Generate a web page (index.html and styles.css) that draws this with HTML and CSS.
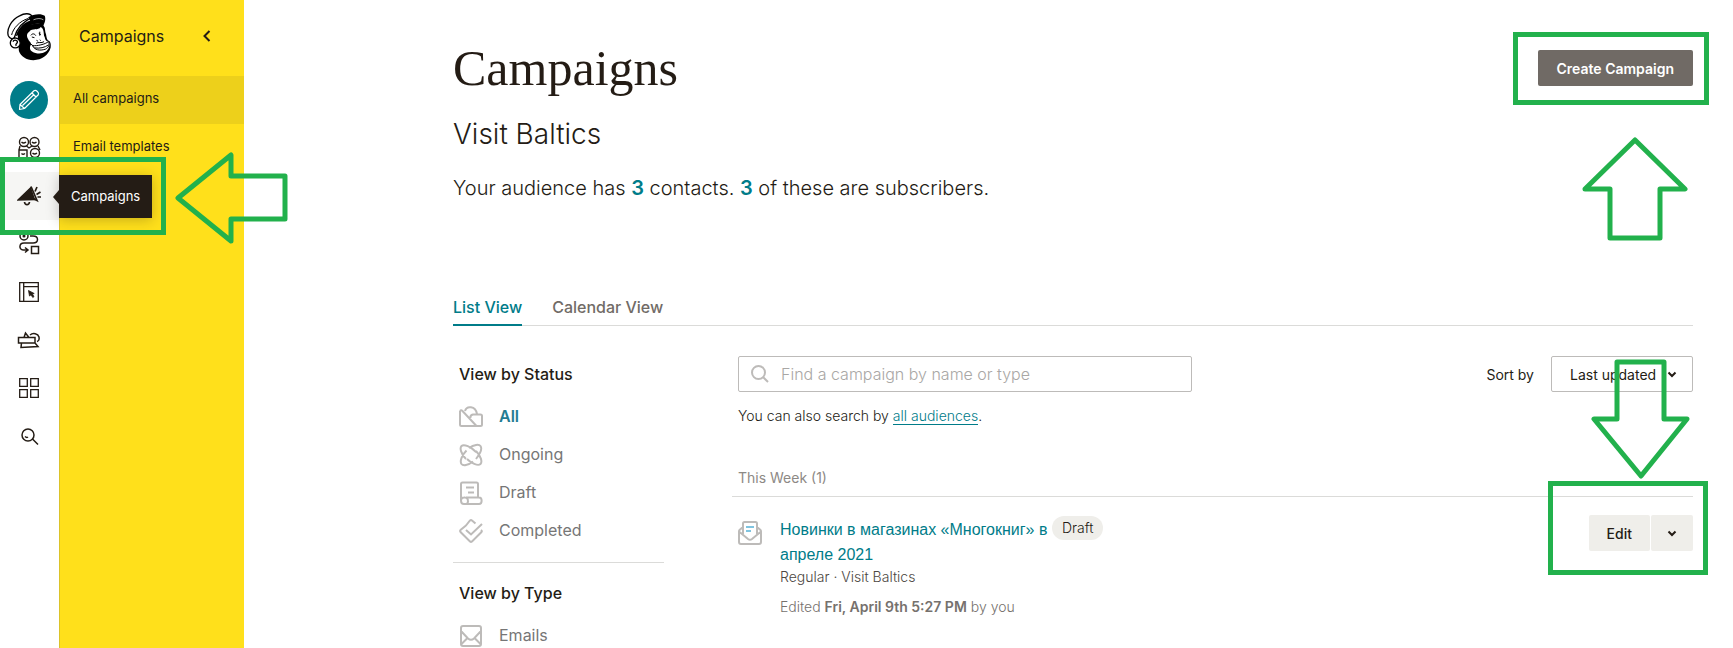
FILE: index.html
```
<!DOCTYPE html>
<html lang="en">
<head>
  <meta charset="UTF-8">
  <title>Campaigns</title>
  <link rel="stylesheet" href="styles.css">
</head>
<body>

<div class="app">
  <nav class="rail" aria-label="Main">
    <a href="#" class="logo" aria-label="Home">
      <svg width="45" height="48" viewBox="20 38 136 144">
        <path d="M52 100 L76 74 L126 68 L134 82 L136 96 C140 106 138 112 143 120 C153 122 153 134 152 142 C146 164 126 180 100 180 C78 180 62 168 56 152 Z" fill="#000"/>
        <path d="M88 93 C96 82 114 92 122 80 C131 84 131 98 132 106 C136 112 134 118 140 122 C148 124 151 130 147 140 C142 156 124 163 106 158 C92 156 86 146 91 136 C97 128 86 124 84 116 C78 106 80 98 88 93 Z" fill="#fff"/>
        <path d="M24 106 C18 88 32 58 58 46 C72 38 90 36 98 50 C84 56 52 74 42 112 C36 118 28 114 24 106 Z" fill="#fff" stroke="#000" stroke-width="4"/>
        <path d="M84 50 C100 40 124 38 134 46 C138 56 134 68 130 75 C118 66 96 70 78 80 C66 86 58 94 54 104 L47 108 C50 90 66 68 90 60 Z" fill="#000"/>
        <path d="M34 104 C38 84 58 62 84 54" fill="none" stroke="#000" stroke-width="3"/>
        <path d="M100 58 C112 53 122 53 130 58" fill="none" stroke="#fff" stroke-width="2"/>
        <circle cx="45" cy="128" r="15" fill="#fff" stroke="#000" stroke-width="4"/>
        <path d="M38 124 C42 116 54 120 51 127 C48 131 44 132 48 137" fill="none" stroke="#000" stroke-width="4"/>
        <path d="M92 105 C97 98 104 100 107 106 M95 110 l8 2 M119 94 v12 M116 99 l6 4 M109 120 l5 3 M119 118 l3 3" fill="none" stroke="#000" stroke-width="3"/>
        <path d="M97 136 C110 138 136 132 145 124 C150 132 146 142 136 147 C118 152 104 150 97 136 Z" fill="#fff" stroke="#000" stroke-width="3" stroke-linejoin="round"/>
        <path d="M102 143 C120 145 134 142 145 134 M92 131 l8 7 M108 129 C114 124 124 130 132 124" fill="none" stroke="#000" stroke-width="3"/>
      </svg>
    </a>
    <a href="#" class="rail-item" aria-label="Create">
      <span class="create">
        <svg width="22" height="22" viewBox="0 0 22 22" fill="none" stroke="#fff" stroke-width="1.2" stroke-linejoin="round">
          <path d="M1.500 20.500 L2 15.500 L16 1.800 C18 .5 21.500 3.800 20.300 5.800 L6.500 19.500 Z M14 4 L18 8 M2 15.500 L6.500 19.500 M4.500 16.500 L16 5.500"/>
        </svg>
      </span>
    </a>
    <a href="#" class="rail-item" aria-label="Audience">
      <svg width="24" height="24" viewBox="0 0 24 24" fill="none" stroke="#241c15" stroke-width="1.4">
        <circle cx="7" cy="6" r="4.500"/><circle cx="17.500" cy="6" r="4.500"/><circle cx="18" cy="17" r="4.500"/>
        <path d="M2 22 V14 H10 V22 M4.500 17.500 q1.500 1.500 3.500 0 M4.500 6 q2 2 4.500 0 M15 6 q2 2 4.500 0 M15.500 17 q2 2 4.500 0 M3 10 L2 14 M21 10 L23 14 M9.500 10 L12 12 L15 10"/>
      </svg>
    </a>
    <a href="#" class="rail-item active" aria-label="Campaigns">
      <svg width="24" height="24" viewBox="0 0 24 24" fill="none" stroke="#241c15" stroke-width="1.4">
        <path d="M1 16 L13.500 4 L17.500 15.500 Z" fill="#241c15"/>
        <path d="M14 2.500 L20 16.500 L15 14 M7.500 18 C8 21.500 12 21.500 12.500 18 M18 7.500 L20 3 M19.500 10.500 L23.500 8 M20.500 13 H24" stroke-width="1.700"/>
      </svg>
      <span class="tooltip">Campaigns</span>
    </a>
    <a href="#" class="rail-item" aria-label="Journeys">
      <svg width="24" height="24" viewBox="0 0 24 24" fill="none" stroke="#241c15" stroke-width="1.5">
        <circle cx="7" cy="4" r="4"/><circle cx="7" cy="4" r=".8"/>
        <path d="M13 4 H16 C22 4 22 11 16 11 H7 C1.500 11 2 18 6 18 H11 M8 15.500 L11 18 L8 20.500"/>
        <rect x="14.500" y="14.500" width="7" height="7"/>
      </svg>
    </a>
    <a href="#" class="rail-item" aria-label="Website">
      <svg width="20" height="20" viewBox="0 0 20 20" fill="none" stroke="#241c15" stroke-width="1.300">
        <path d="M.7 .7 H19.300 V19.300 H.7 Z M4.700 .7 V19.300 M4.700 4.700 H19.300"/>
        <path d="M9.500 8.500 L10.500 14 L12 12.800 L13.800 15.500 L15 14.500 L13.300 12 L15.200 11.500 Z" fill="#241c15" stroke-width=".8"/>
      </svg>
    </a>
    <a href="#" class="rail-item" aria-label="Content Studio">
      <svg width="24" height="24" viewBox="0 0 24 24" fill="none" stroke="#241c15" stroke-width="1.5">
        <path d="M1.500 9.500 H18 V15 H1.500 Z M7 9.500 L8.500 5 L12 9.500 M13 7 C16 4.500 21 5.500 22 9 C22.500 11.500 21.500 13 20 13.500 M4.500 15 L4 19.500 L21 18.500 L18 15"/>
      </svg>
    </a>
    <a href="#" class="rail-item" aria-label="Integrations">
      <svg width="20" height="20" viewBox="0 0 20 20" fill="none" stroke="#241c15" stroke-width="1.300">
        <path d="M.7 .7 H8.300 V8.300 H.7 Z M11.700 .7 H19.300 V8.300 H11.700 Z M.7 11.700 H8.300 V19.300 H.7 Z M11.700 11.700 H19.300 V19.300 H11.700 Z"/>
      </svg>
    </a>
    <a href="#" class="rail-item" aria-label="Search">
      <svg width="20" height="20" viewBox="0 0 20 20" fill="none" stroke="#241c15" stroke-width="1.5">
        <circle cx="9" cy="9" r="6"/><path d="M13.500 13 L19 18.500 M6 10.500 q1.500 1.500 3 .500"/>
      </svg>
    </a>
  </nav>

  <aside class="panel">
    <div class="panel-head">
      <span>Campaigns</span>
      <button class="collapse" aria-label="Collapse menu">
        <svg width="8" height="12" viewBox="0 0 8 12" fill="none" stroke="#241c15" stroke-width="2"><path d="M6.500 1 L1.500 6 L6.500 11"/></svg>
      </button>
    </div>
    <a href="#" class="panel-link current">All campaigns</a>
    <a href="#" class="panel-link">Email templates</a>
  </aside>

  <main class="main">
    <header class="page-head">
      <div>
        <h1>Campaigns</h1>
        <h2>Visit Baltics</h2>
        <p class="summary">Your audience has <a href="#">3</a> contacts. <a href="#">3</a> of these are subscribers.</p>
      </div>
      <button class="btn-create">Create Campaign</button>
    </header>

    <nav class="tabs" aria-label="Views">
      <a href="#" class="tab selected">List View</a>
      <a href="#" class="tab">Calendar View</a>
    </nav>

    <div class="columns">
      <div class="filters">
        <section class="filter-group">
          <h3>View by Status</h3>
          <ul>
            <li><a href="#" class="selected">
              <svg class="ico" viewBox="0 0 24 24"><path d="M1 6 V19.500 Q1 21 2.500 21 H21.500 Q23 21 23 19.500 V11 Q23 9.500 21.500 9.500 H14 Q11 10 11.500 13 M1 6 Q2 4.500 3.500 6 L17.500 21 M6 6 C7.500 .500 16.500 .500 18 9"/></svg>
              All</a></li>
            <li><a href="#">
              <svg class="ico" viewBox="0 0 24 24"><path d="M7 16 C2 11 .500 5 2.500 3 C5 .500 12 4 17 9 M17 8 C22 13 23.500 19 21.500 21 C19 23.500 12 20 8 16 M14 18.500 C9 22.500 4 23 2.500 21 C.500 18 3 12 7.500 7.500 M10 5 C15 1.500 20 1 21.500 3 C23.500 6 21 11 17 16"/></svg>
              Ongoing</a></li>
            <li><a href="#">
              <svg class="ico" viewBox="0 0 24 24"><path d="M2 20 V3 Q2 1.500 3.500 1.500 H17.500 Q19 1.500 19 3 V16 M7 6.500 H15 M9 11.500 H15 M7 16.500 H20 C23.500 16.500 23.500 23 20 23 H5 C1 23 1 16.500 5 16.500 C9 16 10 20 8 23"/></svg>
              Draft</a></li>
            <li><a href="#">
              <svg class="ico" viewBox="0 0 24 24"><path d="M7 6.500 L1.500 11 Q.700 12 1.500 13 L11 22.500 Q12 23.300 13 22.500 L22.500 13 Q23.300 12 22 11 M7 6.500 L11 1.500 Q12 .700 13 1.500 L16.500 4.500 M7 11 L12 15.500 L23 5"/></svg>
              Completed</a></li>
          </ul>
        </section>
        <section class="filter-group">
          <h3>View by Type</h3>
          <ul>
            <li><a href="#">
              <svg class="ico" viewBox="0 0 24 24"><path d="M4 2 H20 Q22 2 22 4 V20 Q22 22 20 22 H4 Q2 22 2 20 V4 Q2 2 4 2 Z M2 7 L9 14.500 Q12 17 15 14.500 L22 7 M2.500 20 L9 13.500 M21.500 20 L15 13.500"/></svg>
              Emails</a></li>
          </ul>
        </section>
      </div>

      <div class="results">
        <div class="toolbar">
          <div class="search">
            <svg width="18" height="18" viewBox="0 0 18 18" fill="none" stroke="#bdbbb9" stroke-width="2"><circle cx="7.500" cy="7.500" r="6.500"/><path d="M12.200 12.200 L17 17"/></svg>
            <input type="text" placeholder="Find a campaign by name or type" aria-label="Find a campaign by name or type">
          </div>
          <div class="sort">
            <label for="sort">Sort by</label>
            <div class="select">
              <select id="sort">
                <option>Last updated</option>
                <option>Last created</option>
              </select>
              <svg width="10" height="7" viewBox="0 0 10 7" fill="none" stroke="#241c15" stroke-width="2"><path d="M1.500 1.500 L5 5 L8.500 1.500"/></svg>
            </div>
          </div>
        </div>
        <p class="hint">You can also search by <a href="#">all audiences</a>.</p>

        <h4>This Week (1)</h4>
        <article class="campaign">
          <svg class="ico mail" viewBox="0 0 24 24"><path d="M5 6 L1.500 9 Q1 9.500 1 10.500 V21 Q1 23 3 23 H21 Q23 23 23 21 V10.500 Q23 9.500 22.500 9 L19 6 M5 13 V2.500 Q5 1 6.500 1 H17.500 Q19 1 19 2.500 V13 M1 10.500 L10 18 Q12 19.500 14 18 L23 10.500"/><path class="lines" d="M8 6 H16 M8 10 H13"/></svg>
          <div class="info">
            <div class="name">
              <a href="#">Новинки в магазинах «Многокниг» в апреле 2021</a>
              <span class="badge">Draft</span>
            </div>
            <p class="kind">Regular · Visit Baltics</p>
            <p class="edited">Edited <b>Fri, April 9th 5:27 PM</b> by you</p>
          </div>
          <div class="actions">
            <button>Edit</button>
            <button class="more" aria-label="More actions"><svg width="10" height="7" viewBox="0 0 10 7" fill="none" stroke="#241c15" stroke-width="2"><path d="M1.500 1.500 L5 5 L8.500 1.500"/></svg></button>
          </div>
        </article>
      </div>
    </div>
  </main>
</div>

<!-- tutorial marks over the page -->
<div class="mark mark-menu"></div>
<div class="mark mark-create"></div>
<div class="mark mark-edit"></div>
<svg class="arrow arrow-left" width="114" height="94" viewBox="0 0 114 94"><path d="M3 46 L56 3 V24 H110 V67 H56 V89 Z"/></svg>
<svg class="arrow arrow-up" width="106" height="106" viewBox="0 0 106 106"><path d="M53 4 L103 53 H78 V102 H28 V53 H3 Z"/></svg>
<svg class="arrow arrow-down" width="100" height="120" viewBox="0 0 100 120"><path d="M27 3 H74 V60 H97 L51 117 L4 60 H27 Z"/></svg>

</body>
</html>
```

FILE: styles.css
```
* { box-sizing: border-box; }
body { margin: 0; background: #fff; color: #241c15; font-family: Inter, "Liberation Sans", sans-serif; font-size: 14px; position: relative; }
h1, h2, h3, h4, p, ul { margin: 0; padding: 0; font-weight: 400; }
ul { list-style: none; }
a { color: #007c89; text-decoration: none; }
svg { display: block; flex: none; }
button, input, select { font: inherit; color: inherit; }
button { cursor: pointer; border: 0; }

.app { display: flex; min-height: 100vh; }

/* icon rail */
.rail { flex: none; width: 60px; padding-top: 13px; border-right: 1px solid #dbc329; }
.logo { display: block; margin: 0 0 15px 7px; }
.rail-item { display: flex; align-items: center; justify-content: center; height: 48px; padding-right: 1px; position: relative; }
.rail-item.active { background: #f6f6f4; }
.create { display: grid; place-items: center; width: 38px; height: 38px; border-radius: 50%; background: #007c89; }
.tooltip {
  position: absolute; left: 100%; top: 3px; z-index: 2; padding: 0 12px;
  font-size: 13px; line-height: 43px; background: #241c15; color: #fff; box-shadow: 0 2px 12px rgba(36, 28, 21, .25);
}
.tooltip::before {
  content: ""; position: absolute; left: -6px; top: 15px;
  border: solid transparent; border-width: 7px 6px 7px 0; border-right-color: #241c15;
}

/* yellow side menu */
.panel { flex: none; width: 184px; background: #ffe01b; }
.panel-head { display: flex; align-items: center; justify-content: space-between; height: 76px; padding: 0 33px 4px 19px; font-size: 16px; }
.collapse { padding: 0; background: none; }
.panel-link { display: flex; align-items: center; height: 48px; padding: 0 13px 4px; color: #241c15; font-size: 13px; }
.panel-link.current { background: #edd01b; }

.main { flex: 1; min-width: 0; padding: 0 40px 0 209px; }
.page-head { display: flex; justify-content: space-between; align-items: flex-start; padding-top: 40px; }
h1 { font-family: "Liberation Serif", serif; font-size: 50px; line-height: 56px; }
h2 { margin-top: 20px; font-size: 28px; line-height: 36px; font-weight: 300; }
.summary { margin-top: 22px; font-size: 20px; line-height: 28px; font-weight: 300; }
.summary a { font-weight: 600; }
.btn-create { margin-top: 10px; height: 36px; padding: 0 19px; border-radius: 2px; background: #706a65; color: #fff; font-size: 14px; font-weight: 600; }

.tabs { display: flex; gap: 30px; margin-top: 93px; border-bottom: 1px solid #dbdbd9; }
.tab { padding-bottom: 5px; margin-bottom: -1px; border-bottom: 2px solid transparent; font-size: 16px; line-height: 24px; font-weight: 500; color: #716b66; }
.tab.selected { border-color: #007c89; color: #007c89; }

.columns { display: grid; grid-template-columns: 211px 1fr; gap: 68px; padding-top: 30px; }
.filter-group { padding: 8px 6px 0; }
.filter-group + .filter-group { margin-top: 19px; padding-top: 20px; border-top: 1px solid #dbdbd9; }
h3 { margin-bottom: 21px; font-size: 16px; line-height: 20px; font-weight: 500; }
.filters ul { display: grid; gap: 14px; }
.filters li a { display: flex; gap: 16px; height: 24px; font-size: 16px; line-height: 22px; color: #767676; }
.filters li a.selected { color: #237c92; font-weight: 600; }
.ico { width: 24px; height: 24px; fill: none; stroke: #bdbbb9; stroke-width: 2; }

.toolbar { display: flex; justify-content: space-between; padding-left: 6px; }
.search { display: flex; align-items: center; gap: 12px; width: 454px; height: 36px; padding: 0 12px; border: 1px solid #bdbbb9; border-radius: 2px; }
.search input { flex: 1; min-width: 0; padding: 0; border: 0; outline: 0; background: none; font-size: 16px; }
.search input::placeholder { color: #a9a7a5; font-weight: 300; }
.sort { display: flex; align-items: center; gap: 17px; }
.select { position: relative; }
.select select { appearance: none; height: 36px; width: 142px; padding: 0 18px; border: 1px solid #bdbbb9; border-radius: 2px; background: #fff; }
.select svg { position: absolute; right: 16px; top: 15px; pointer-events: none; }
.hint { margin-top: 14px; padding-left: 6px; line-height: 20px; font-weight: 300; }
.hint a { border-bottom: 1px solid #007c89; }
h4 { margin-top: 42px; padding: 0 6px 8px; border-bottom: 1px solid #dbdbd9; line-height: 20px; color: #8d8985; font-size: 14px; }

.campaign { display: flex; align-items: flex-start; padding: 18px 0 0 6px; }
.mail { margin-top: 6px; }
.mail .lines { stroke: #7fc4e0; }
.info { flex: 1; margin-left: 18px; }
.name { display: flex; align-items: flex-start; gap: 2px; }
.name a { width: 270px; padding-top: 2px; font-family: "Liberation Sans", sans-serif; font-size: 16px; line-height: 25px; }
.badge { margin-top: 1px; padding: 0 10px; border-radius: 12px; background: #efeeea; line-height: 24px; font-weight: 300; }
.kind { line-height: 20px; color: #4c4742; font-weight: 300; }
.edited { margin-top: 10px; line-height: 20px; color: #76716d; font-weight: 300; }
.edited b { font-weight: 600; }
.actions { display: flex; gap: 1px; }
.actions button { height: 36px; padding: 0 18px; background: #efeeea; font-weight: 500; border-radius: 2px; }
.actions .more { padding: 0 16px; }

/* green marks */
.mark { position: absolute; z-index: 3; border: 5px solid #22b14c; pointer-events: none; }
.mark-menu { left: 0; top: 157px; width: 166px; height: 78px; }
.mark-create { right: 24px; top: 32px; width: 196px; height: 73px; }
.mark-edit { right: 25px; top: 481px; width: 160px; height: 94px; }
.arrow { position: absolute; z-index: 3; fill: none; stroke: #22b14c; stroke-width: 5; stroke-linejoin: round; pointer-events: none; }
.arrow-left { left: 175px; top: 152px; }
.arrow-up { right: 45px; top: 136px; }
.arrow-down { right: 43px; top: 359px; }
```
